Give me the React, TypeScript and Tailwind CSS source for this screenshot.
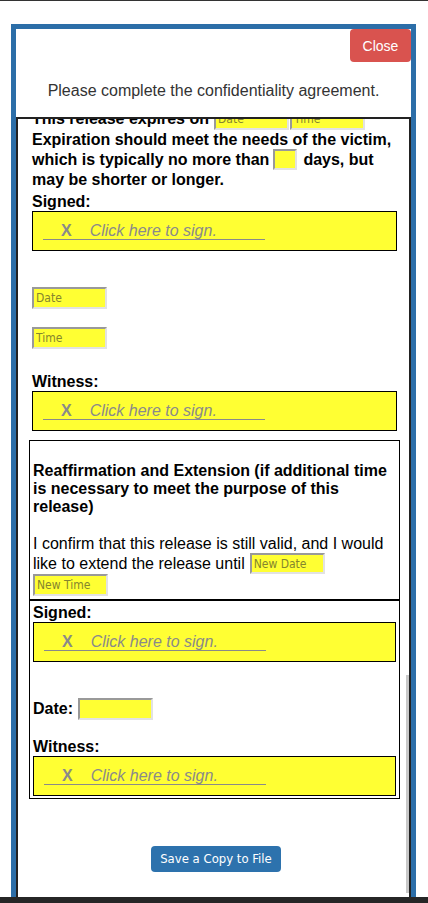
import React from "react";

const Field = ({ ph = "", className = "" }: { ph?: string; className?: string }) => (
  <input
    readOnly
    placeholder={ph}
    className={`h-[22px] w-[75px] shrink-0 border-2 border-t-[#999] border-l-[#999] border-b-[#e2e2e2] border-r-[#e2e2e2] bg-[#ffff33] pl-[2px] font-['DejaVu_Sans_Condensed','DejaVu_Sans',sans-serif] text-[12px] font-normal text-[#555] outline-none placeholder:text-[#85852e] ${className}`}
  />
);

const Sig = ({ className = "" }: { className?: string }) => (
  <div className={`h-[40px] border border-black bg-[#ffff33] pl-[10px] ${className}`}>
    <div className="mt-[10px] flex w-[222px] border-b border-[#8a8a8a] pl-[18px] text-[16px] leading-[17px] text-[#8a8a8a]">
      <span className="font-bold">X</span>
      <span className="ml-[18px] italic">Click here to sign.</span>
    </div>
  </div>
);

const Label = ({ children, className = "" }: { children: React.ReactNode; className?: string }) => (
  <div className={`h-[18px] text-[16px] font-bold leading-[18px] text-black ${className}`}>{children}</div>
);

export default function App() {
  return (
    <div className="flex h-[903px] w-[428px] flex-col overflow-hidden bg-white font-['Liberation_Sans',Arial,sans-serif]">
      <div className="h-px bg-[#333]" />
      <div className="h-[23px]" />

      <div className="h-[873px] overflow-hidden">
        <div className="ml-[11px] flex h-full w-[405px] flex-col border-[5px] border-b-0 border-[#2c6ea8] bg-white">
          {/* header */}
          <div className="h-[88px] shrink-0">
            <div className="flex justify-end">
              <button className="h-[33px] w-[61px] rounded-[4px] bg-[#d9534f] pt-[2px] text-[14px] text-white">Close</button>
            </div>
            <p className="mt-[20px] text-center text-[16px] leading-[18px] text-[#333]">
              Please complete the confidentiality agreement.
            </p>
          </div>

          {/* scrolled form */}
          <div className="relative flex-1 overflow-hidden border-2 border-b-0 border-[#222]">
            <div className="-mt-[12px] pl-[14px] pr-[12px]">
              <div className="text-[16px] font-bold text-black">
                <div className="flex h-[23px] items-center whitespace-nowrap">
                  <span>This release expires on</span>
                  <Field ph="Date" className="ml-[5px]" />
                  <Field ph="Time" className="ml-px" />
                </div>
                <div className="h-[19px] whitespace-nowrap leading-[19px]">
                  Expiration should meet the needs of the victim,
                </div>
                <div className="flex h-[21px] items-center whitespace-nowrap">
                  <span>which is typically no more than</span>
                  <Field className="ml-[4px] !h-[21px] !w-[24px]" />
                  <span className="ml-[6px]">days, but</span>
                </div>
                <div className="h-[19px] whitespace-nowrap leading-[19px]">may be shorter or longer.</div>
              </div>

              <Label className="mt-[4px]">Signed:</Label>
              <Sig />

              <Field ph="Date" className="mt-[36px] block" />
              <Field ph="Time" className="mt-[18px] block" />

              <Label className="mt-[24px]">Witness:</Label>
              <Sig />

              <div className="-ml-[3px] mt-[9px] w-[371px] border border-black">
                <div className="px-[3px] pb-[3px] pt-[21px] text-[16px] text-black">
                  <p className="font-bold leading-[18px]">
                    Reaffirmation and Extension (if additional time
                    <br />
                    is necessary to meet the purpose of this
                    <br />
                    release)
                  </p>
                  <div className="mt-[18px] h-[19px] whitespace-nowrap leading-[19px]">
                    I confirm that this release is still valid, and I would
                  </div>
                  <div className="flex h-[21px] items-center whitespace-nowrap">
                    <span>like to extend the release until</span>
                    <Field ph="New Date" className="ml-[5px] !h-[21px]" />
                  </div>
                  <Field ph="New Time" className="block" />
                </div>

                <div className="border-t-2 border-black px-[2px] pb-[2px] pt-[3px]">
                  <Label className="ml-px">Signed:</Label>
                  <Sig className="ml-px w-[363px]" />
                  <div className="ml-px mt-[36px] flex h-[22px] items-center">
                    <span className="text-[16px] font-bold text-black">Date:</span>
                    <Field className="ml-[5px]" />
                  </div>
                  <Label className="ml-px mt-[18px]">Witness:</Label>
                  <Sig className="ml-px w-[363px]" />
                </div>
              </div>

              <button className="ml-[119px] mt-[47px] h-[26px] w-[130px] rounded-[4px] bg-[#2d72ad] font-['DejaVu_Sans_Condensed','DejaVu_Sans',sans-serif] text-[13px] leading-[26px] text-white">
                Save a Copy to File
              </button>
            </div>

            {/* scrollbar thumb */}
            <div className="absolute right-0 top-[556px] h-[218px] w-[3px] bg-[#c8c8c8]" />
          </div>
        </div>
      </div>

      <div className="h-[6px] bg-[#262626]" />
    </div>
  );
}
